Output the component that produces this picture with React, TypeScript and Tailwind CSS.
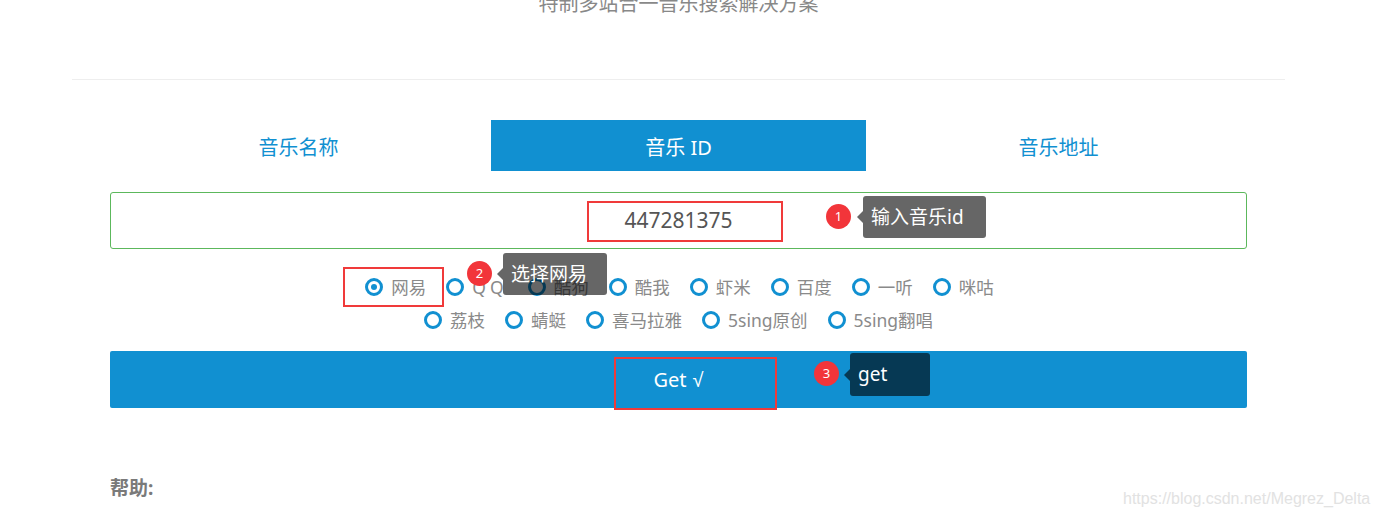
import React from 'react';

const row1 = ['网易', 'QQ', '酷狗', '酷我', '虾米', '百度', '一听', '咪咕'];
const row2 = ['荔枝', '蜻蜓', '喜马拉雅', '5sing原创', '5sing翻唱'];

const Radio = ({ label, checked }: { label: string; checked?: boolean }) => (
  <label className="flex items-center gap-[8px] cursor-pointer">
    <span className="flex h-[18px] w-[18px] items-center justify-center rounded-full border-[3px] border-[#1190d1] bg-white">
      {checked && <span className="h-[6px] w-[6px] rounded-full bg-[#1190d1]" />}
    </span>
    <span className={label === 'QQ' ? 'tracking-[4px]' : ''}>{label}</span>
  </label>
);

// numbered red dot + dark tip, used for the step annotations
const Badge = ({ n, className }: { n: number; className: string }) => (
  <div
    className={`absolute flex h-[25px] w-[25px] items-center justify-center rounded-full bg-[#f2353a] text-[13px] leading-none text-white ${className}`}
  >
    {n}
  </div>
);

const Tip = ({ text, className }: { text: string; className: string }) => (
  <div className={`absolute flex items-center rounded-[3px] bg-black/60 pl-[8px] text-[19px] text-white ${className}`}>
    <span className="absolute left-[-6px] top-1/2 -translate-y-1/2 border-y-[6px] border-r-[6px] border-y-transparent border-r-black/60" />
    {text}
  </div>
);

export default function App() {
  return (
    <div className="relative h-[514px] w-full overflow-hidden bg-white font-['Noto_Sans','Noto_Sans_CJK_SC',sans-serif]">
      <div className="w-[1357px]">
        {/* subtitle, cut off at the top */}
        <div className="-mt-[6px] h-[20px] text-center text-[20px] leading-[20px] text-[#888]">
          特制多站合一音乐搜索解决方案
        </div>

        <div className="ml-[72px] mt-[65px] h-px w-[1213px] bg-[#eeeeee]" />

        <div className="ml-[110px] w-[1137px]">
          {/* tabs */}
          <div className="mt-[40px] flex h-[51px] pt-[4px] text-[20px] text-[#1190d1]">
            <div className="flex w-[381px] items-center justify-center pr-[4px]">音乐名称</div>
            <div className="-mt-[4px] flex w-[375px] items-center justify-center bg-[#1190d1] pt-[4px] text-white">音乐 ID</div>
            <div className="flex flex-1 items-center justify-center pl-[4px]">音乐地址</div>
          </div>

          {/* id input */}
          <div className="mt-[21px] flex h-[57px] items-center justify-center rounded-[3px] border border-[#5cb85c] text-[21px] text-[#555]">
            447281375
          </div>

          {/* sources */}
          <div className="mt-[25px] flex flex-col gap-[7px] text-[17.5px] text-[#8a8a8a]">
            <div className="flex h-[26px] items-center justify-center gap-[20px] pl-[2px]">
              {row1.map((s, i) => (
                <Radio key={s} label={s} checked={i === 0} />
              ))}
            </div>
            <div className="flex h-[26px] items-center justify-center gap-[20px]">
              {row2.map((s) => (
                <Radio key={s} label={s} />
              ))}
            </div>
          </div>

          <button className="mt-[18px] flex h-[57px] w-full items-center justify-center gap-[6px] rounded-[2px] bg-[#1190d1] text-[20px] text-white">
            Get<span className="font-['Liberation_Sans',sans-serif]">√</span>
          </button>

          <div className="mt-[67px] h-[26px] text-[19px] font-bold leading-[26px] text-[#7a7a7a]">帮助:</div>
        </div>
      </div>

      {/* annotations */}
      <div className="absolute left-[587px] top-[201px] h-[41px] w-[196px] border-2 border-[#f03a3a]" />
      <div className="absolute left-[343px] top-[267px] h-[40px] w-[101px] border-2 border-[#f03a3a]" />
      <div className="absolute left-[614px] top-[357px] h-[53px] w-[163px] border-2 border-[#f03a3a]" />

      <Badge n={1} className="left-[826px] top-[204px]" />
      <Badge n={2} className="left-[467px] top-[261px]" />
      <Badge n={3} className="left-[814px] top-[361px]" />

      <Tip text="输入音乐id" className="left-[863px] top-[196px] h-[42px] w-[123px]" />
      <Tip text="选择网易" className="left-[503px] top-[253px] h-[42px] w-[104px]" />
      <Tip text="get" className="left-[850px] top-[353px] h-[43px] w-[80px]" />

      <div className="absolute left-[1123px] top-[487px] font-['Liberation_Sans',sans-serif] text-[16px] text-[#e2e2e2]">
        https://blog.csdn.net/Megrez_Delta
      </div>
    </div>
  );
}
